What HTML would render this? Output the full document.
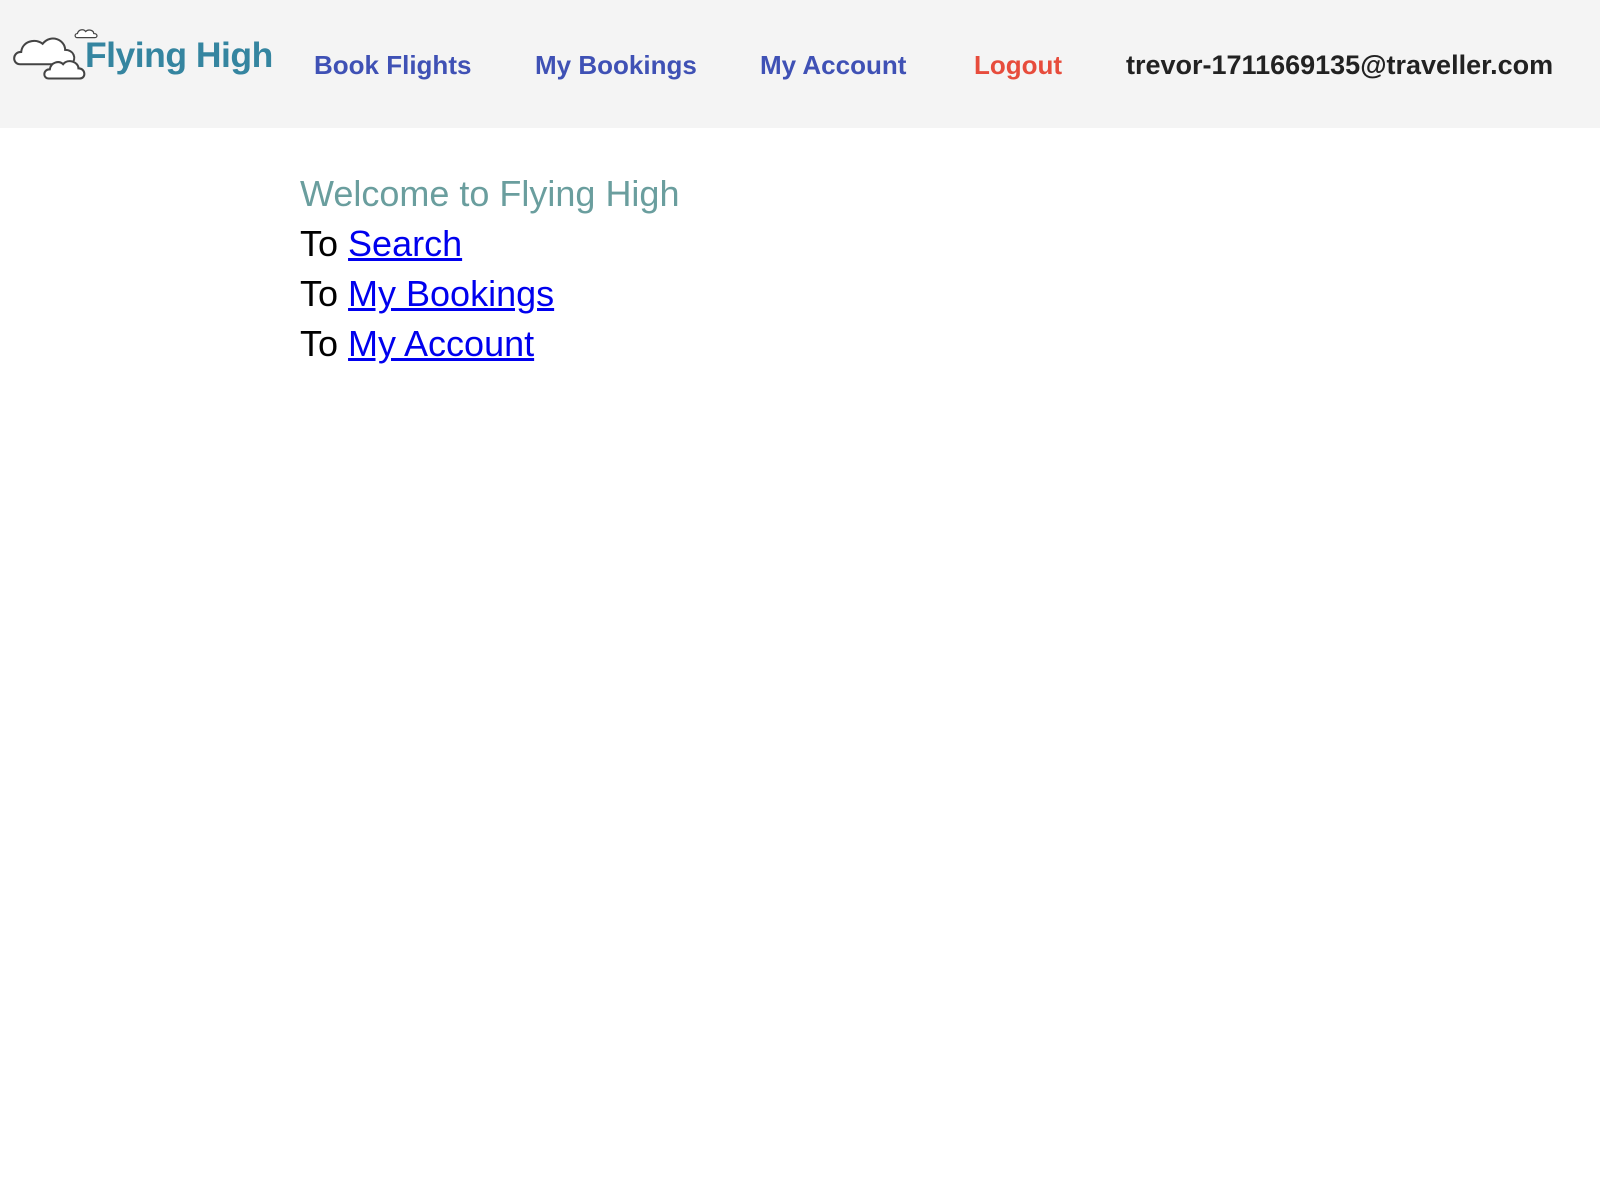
<!DOCTYPE html>
<html><head><style>
body{margin:0;background:#fff;font-family:"Liberation Sans",sans-serif;}
.hdr{height:128px;background:#f4f4f4;position:relative;}
.logo{position:absolute;left:12px;top:23px;}
.lt{position:absolute;left:85px;top:35px;font-size:35.5px;font-weight:bold;color:#3585a0;letter-spacing:-0.5px;}
.nav{position:absolute;top:50px;font-size:26px;font-weight:bold;color:#3f51b5;white-space:nowrap;}
.c{position:absolute;left:300px;font-size:36px;}
a{color:#0000ee;}
</style></head><body>
<div class="hdr">
<svg class="logo" width="92" height="62" viewBox="0 0 90 60">
<g fill="#fff" stroke="#444" stroke-width="2">
<path d="M8 40 C0 40 0 28 9 28 C10 18 22 14 30 20 C38 10 52 16 52 26 C60 26 64 34 58 40 Z"/>
<path d="M36 54 C30 54 30 45 37 45 C38 38 46 36 50 40 C55 34 65 38 65 44 C72 44 73 54 66 54 Z"/>
<path d="M64 14 C61 14 61 10 64 10 C65 6 70 5 72 8 C75 5 80 7 80 10 C84 10 84 14 81 14 Z" stroke-width="1.2"/>
</g></svg>
<div class="lt">Flying High</div>
<div class="nav" style="left:314px">Book Flights</div>
<div class="nav" style="left:535px">My Bookings</div>
<div class="nav" style="left:760px">My Account</div>
<div class="nav" style="left:974px;color:#e74c3c">Logout</div>
<div class="nav" style="left:1126px;color:#222;font-size:27px">trevor-1711669135@traveller.com</div>
</div>
<div class="c" style="top:173px;color:#6a9e9e">Welcome to Flying High</div>
<div class="c" style="top:223px">To <a href="#">Search</a></div>
<div class="c" style="top:273px">To <a href="#">My Bookings</a></div>
<div class="c" style="top:323px">To <a href="#">My Account</a></div>
</body></html>
